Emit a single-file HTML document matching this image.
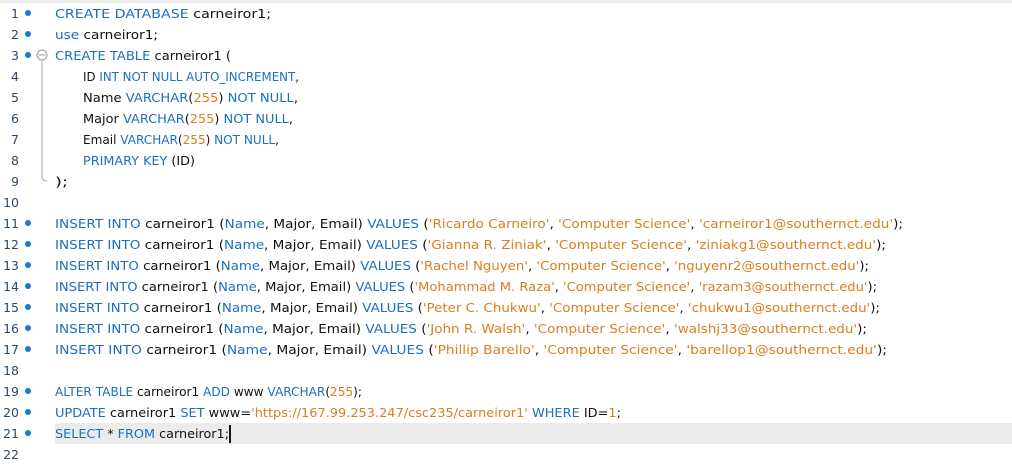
<!DOCTYPE html>
<html><head><style>
body{margin:0;background:#fff;width:1012px;height:459px;overflow:hidden;position:relative;font-family:"DejaVu Sans","Liberation Sans",sans-serif;font-size:12.5px;}
.top{position:absolute;left:0;top:0;width:1012px;height:3px;background:#ececec}
.ln{position:absolute;left:0;width:19px;text-align:right;color:#2b4a6b;height:21px;line-height:21px}
.dot{position:absolute;left:25px;width:6px;height:6px;border-radius:3px;background:#1d79d1}
.code{position:absolute;left:55px;height:21px;line-height:21px;white-space:pre;color:#111;transform-origin:0 50%}
.k{color:#1b6fc0}.s{color:#d87f1e}
.hl{position:absolute;left:55px;top:423px;width:957px;height:21px;background:#ebebeb}
.cur{position:absolute;left:229px;top:425px;width:2px;height:18px;background:#111}
</style></head><body>
<div class="top"></div>
<div class="hl"></div>
<div id="c"></div>
<svg style="position:absolute;left:0;top:0" width="60" height="459">
<circle cx="42" cy="55" r="5" fill="none" stroke="#999"/><line x1="38.5" y1="55" x2="45.5" y2="55" stroke="#999"/>
<line x1="42" y1="60" x2="42" y2="178" stroke="#aaa"/><path d="M42 176 Q42 181 47 181" fill="none" stroke="#aaa"/>
</svg>
<script>
const L=[
'<span class=k>CREATE DATABASE</span> carneiror1;',
'<span class=k>use</span> carneiror1;',
'<span class=k>CREATE TABLE</span> carneiror1 (',
'ID <span class=k>INT NOT NULL AUTO_INCREMENT</span>,',
'Name <span class=k>VARCHAR</span>(<span class=s>255</span>) <span class=k>NOT NULL</span>,',
'Major <span class=k>VARCHAR</span>(<span class=s>255</span>) <span class=k>NOT NULL</span>,',
'Email <span class=k>VARCHAR</span>(<span class=s>255</span>) <span class=k>NOT NULL</span>,',
'<span class=k>PRIMARY KEY</span> (ID)',
');','',
];
const P=[['Ricardo Carneiro','carneiror1'],['Gianna R. Ziniak','ziniakg1'],['Rachel Nguyen','nguyenr2'],['Mohammad M. Raza','razam3'],['Peter C. Chukwu','chukwu1'],['John R. Walsh','walshj33'],['Phillip Barello','barellop1']];
P.forEach(p=>L.push(`<span class=k>INSERT INTO</span> carneiror1 (<span class=k>Name</span>, Major, Email) <span class=k>VALUES</span> (<span class=s>'${p[0]}'</span>, <span class=s>'Computer Science'</span>, <span class=s>'${p[1]}@southernct.edu'</span>);`));
L.push('');
L.push('<span class=k>ALTER TABLE</span> carneiror1 <span class=k>ADD</span> www <span class=k>VARCHAR</span>(<span class=s>255</span>);');
L.push('<span class=k>UPDATE</span> carneiror1 <span class=k>SET</span> www=<span class=s>\'https://167.99.253.247/csc235/carneiror1\'</span> <span class=k>WHERE</span> ID=<span class=s>1</span>;');
L.push('<span class=k>SELECT</span> * <span class=k>FROM</span> carneiror1;');
L.push('');
const E=[271,158,231,299,298,293,279,195,68,0,903,886,869,877,880,867,887,0,362,621,229,0];
let h='';
L.forEach((t,i)=>{const y=3+21*i;const ind=(i>=3&&i<=7)?83:55;h+=`<div class=ln style="top:${y}px">${i+1}</div>`;
if(t!==''&&!(i>=3&&i<=8))h+=`<div class=dot style="top:${y+7}px"></div>`;
h+=`<div class=code id=l${i} style="top:${y}px;left:${ind}px">${t}</div>`;});
document.getElementById('c').innerHTML=h;
L.forEach((t,i)=>{if(!E[i])return;const d=document.getElementById('l'+i);const r=d.getBoundingClientRect();const s=(E[i]-r.left)/r.width;d.style.transform=`scaleX(${s})`;});
</script>
<div class="cur"></div>
</body></html>
